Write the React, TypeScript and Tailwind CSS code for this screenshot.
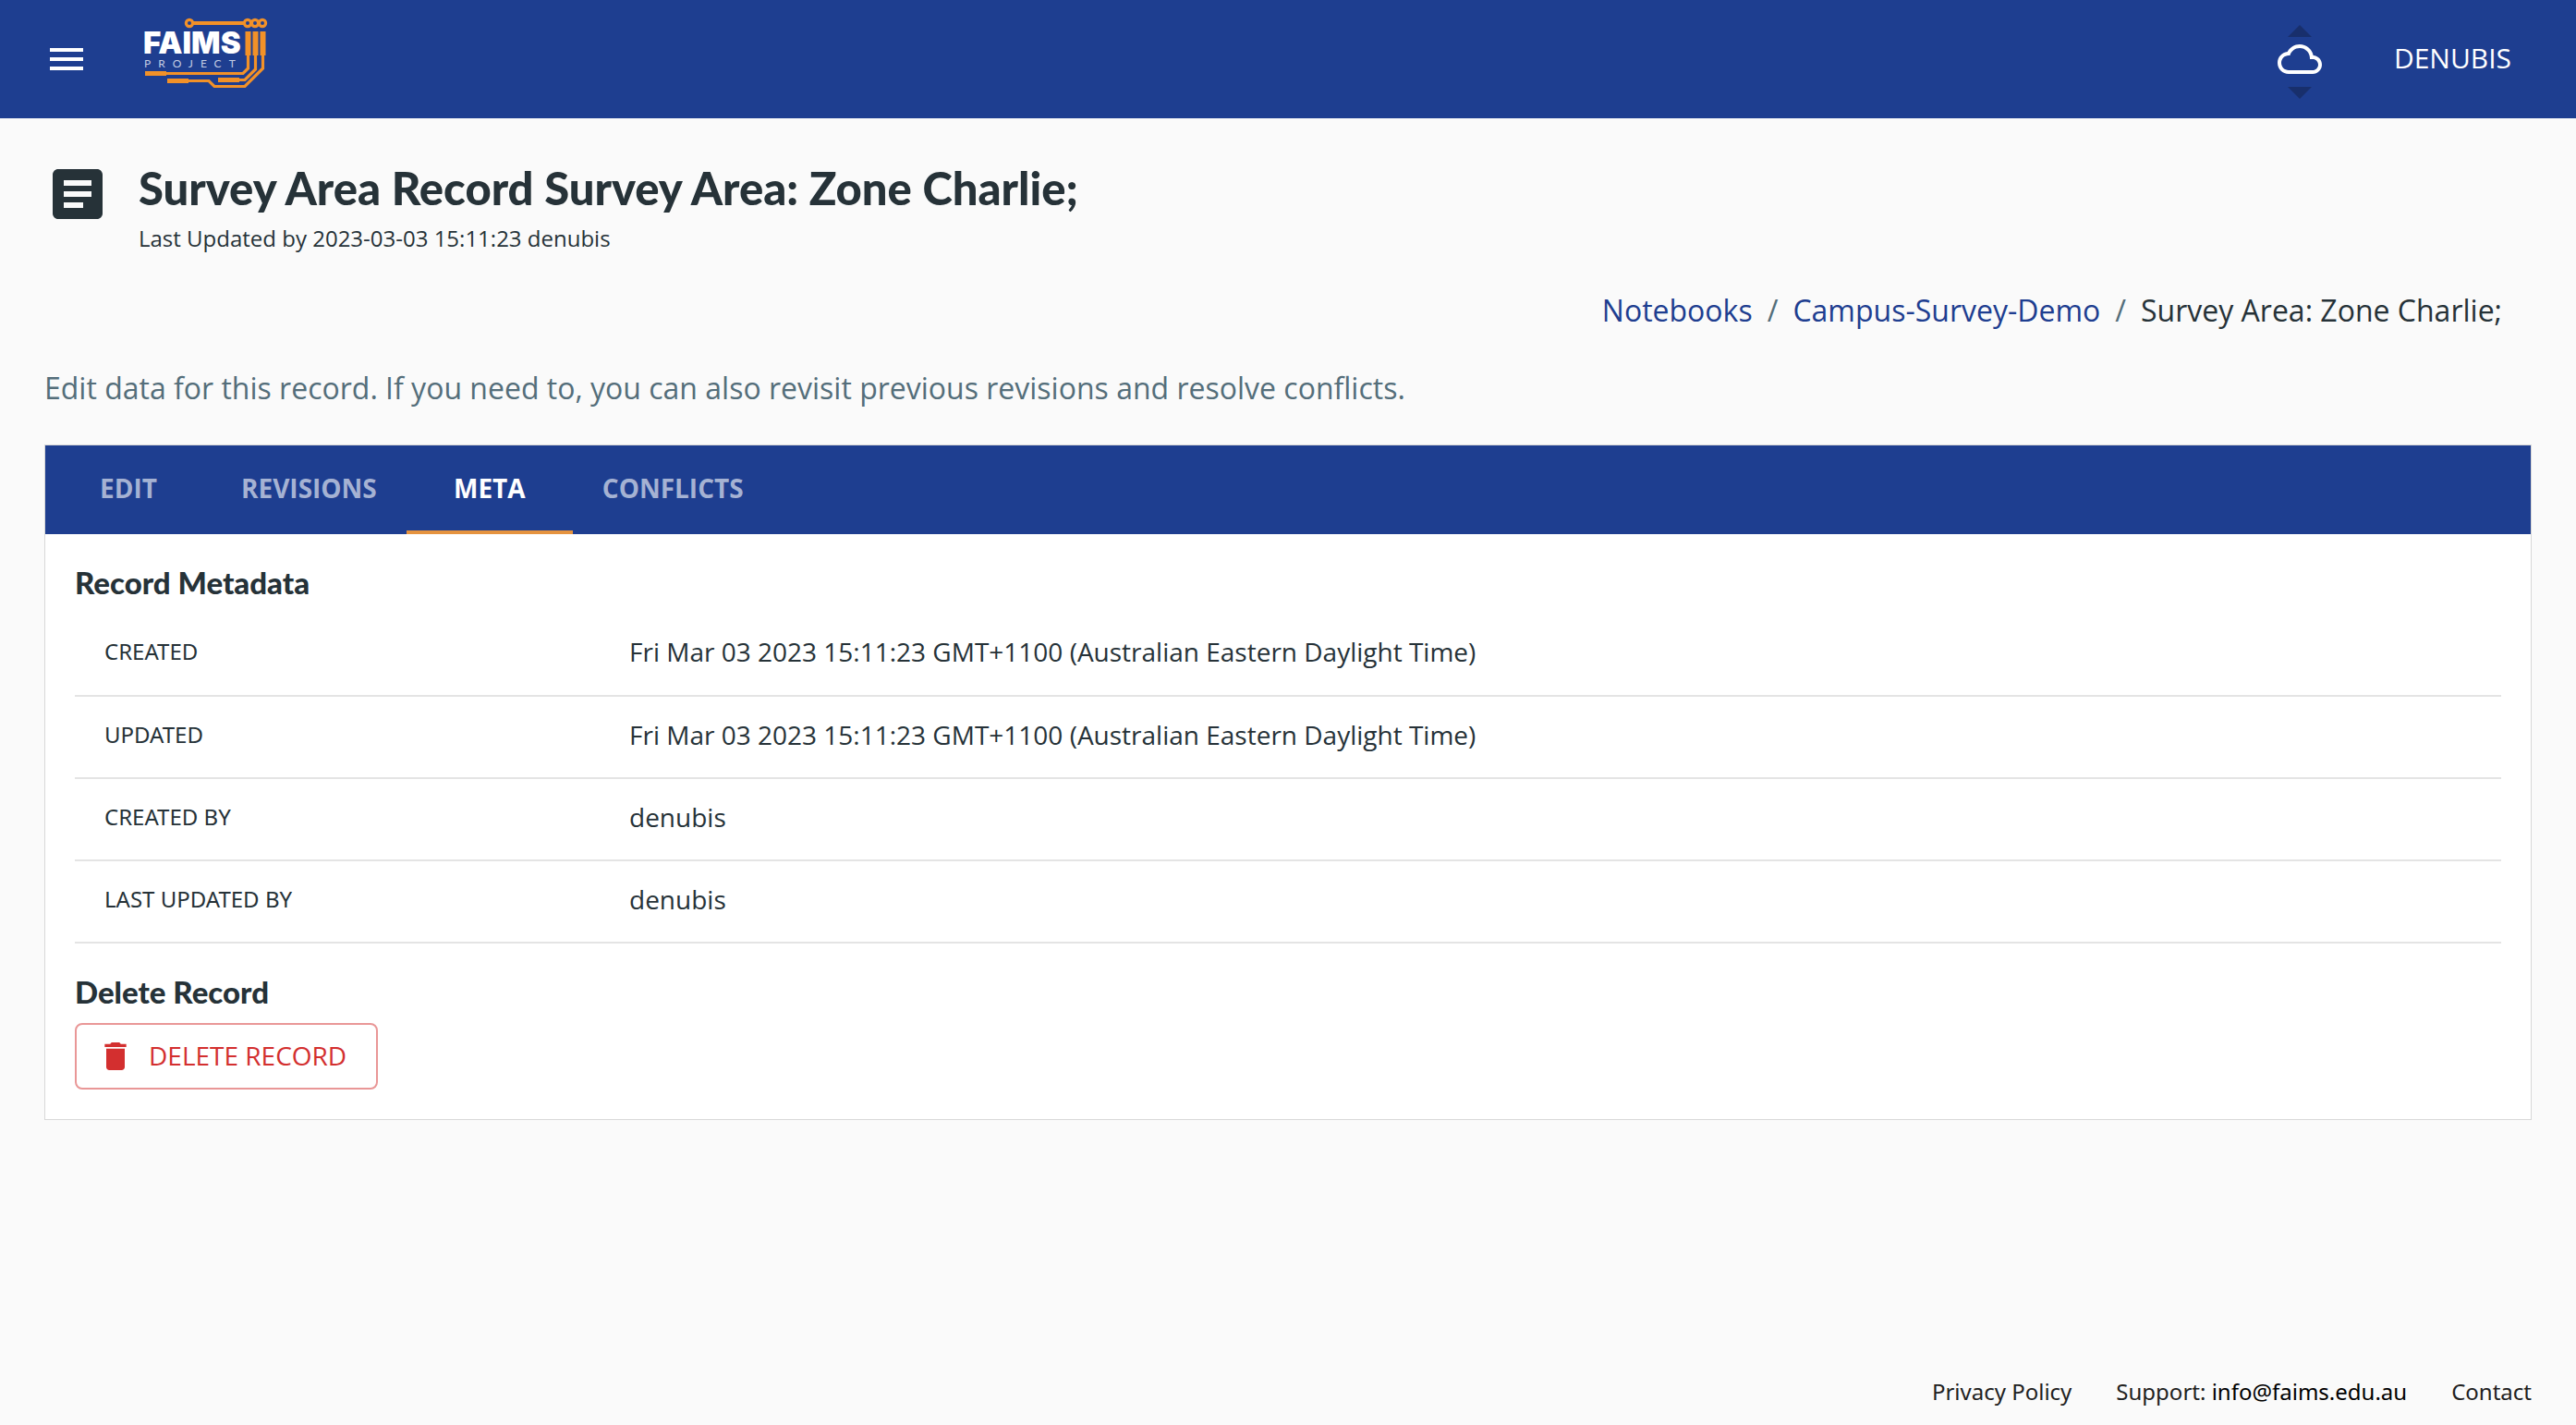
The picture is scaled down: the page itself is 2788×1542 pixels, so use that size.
import React from "react";

function FaimsLogo() {
  return (
    <svg
      viewBox="0 0 136 80"
      className="h-20 w-[136px]"
      fill="none"
      role="img"
      aria-label="FAIMS Project"
    >
      <g stroke="#f29128">
        <g strokeWidth="3.2">
          <circle cx="49" cy="9" r="3.6" />
          <path d="M53 9H108" strokeWidth="4" />
          <circle cx="112" cy="9" r="3.6" />
          <circle cx="120" cy="9" r="3.6" />
          <circle cx="128" cy="9" r="3.6" />
          <path d="M112.500 42V58L107 63.500H22" />
          <path d="M120.500 42V59L109 70.500H100" />
          <path d="M128.500 42V58L109 77.500H76L70 71.500H46" />
        </g>
        <g strokeWidth="6">
          <path d="M112.500 18V44M120.500 18V44M128.500 18V44" />
        </g>
        <g strokeWidth="5">
          <path d="M1 63.500H24M80 70.500H103M25 71.500H48" />
        </g>
      </g>
      <text x="-1" y="42" fill="#fff" className="font-['Inter',sans-serif] text-[33px] font-black">
        FAIMS
      </text>
      <text x="0" y="57" fill="#c3cce3" className="font-['Lato',sans-serif] text-[12px] font-normal tracking-[8px]">
        PROJECT
      </text>
    </svg>
  );
}

function MaterialIcon({ d, className }: { d: string; className: string }) {
  return (
    <svg viewBox="0 0 24 24" fill="currentColor" className={className} aria-hidden="true">
      <path d={d} />
    </svg>
  );
}

const ICONS = {
  menu: "M3 18h18v-2H3v2zm0-5h18v-2H3v2zm0-7v2h18V6H3z",
  cloud:
    "M19.35 10.04C18.67 6.59 15.64 4 12 4 9.11 4 6.6 5.64 5.35 8.04 2.34 8.36 0 10.91 0 14c0 3.31 2.69 6 6 6h13c2.76 0 5-2.24 5-5 0-2.64-2.05-4.78-4.65-4.96zM19 18H6c-2.21 0-4-1.79-4-4s1.79-4 4-4h.71C7.37 7.69 9.48 6 12 6c3.04 0 5.500 2.46 5.500 5.500v.5H19c1.66 0 3 1.34 3 3s-1.34 3-3 3z",
  article:
    "M19 3H5c-1.100 0-2 .9-2 2v14c0 1.100.9 2 2 2h14c1.100 0 2-.9 2-2V5c0-1.100-.9-2-2-2zm-5 14H7v-2h7v2zm3-4H7v-2h10v2zm0-4H7V7h10v2z",
  trash: "M6 19c0 1.100.9 2 2 2h8c1.100 0 2-.9 2-2V7H6v12zM19 4h-3.500l-1-1h-5l-1 1H5v2h14V4z",
};

const TABS = ["EDIT", "REVISIONS", "META", "CONFLICTS"];

const METADATA = [
  ["CREATED", "Fri Mar 03 2023 15:11:23 GMT+1100 (Australian Eastern Daylight Time)"],
  ["UPDATED", "Fri Mar 03 2023 15:11:23 GMT+1100 (Australian Eastern Daylight Time)"],
  ["CREATED BY", "denubis"],
  ["LAST UPDATED BY", "denubis"],
];

function Header() {
  return (
    <header className="flex h-32 items-center bg-[#1e3e90] px-12 text-white">
      <button type="button" aria-label="Open menu" className="mr-[60px]">
        <MaterialIcon d={ICONS.menu} className="size-12" />
      </button>
      <a href="#home" className="-mt-4">
        <FaimsLogo />
      </a>
      <div className="ml-auto flex items-center">
        <button type="button" aria-label="Sync status" className="flex flex-col items-center gap-2 pt-[6px]">
          <svg viewBox="0 0 26 13" className="h-[13px] w-[26px]" fill="#182f6c" aria-hidden="true">
            <path d="M0 13L13 0L26 13Z" />
          </svg>
          <span className="flex h-[38px] items-start">
            <MaterialIcon d={ICONS.cloud} className="-mt-2 size-12" />
          </span>
          <svg viewBox="0 0 26 13" className="h-[13px] w-[26px]" fill="#182f6c" aria-hidden="true">
            <path d="M0 0L13 13L26 0Z" />
          </svg>
        </button>
        <button type="button" className="ml-14 px-[22px] pb-0.5 text-[30px] leading-10 font-medium">
          DENUBIS
        </button>
      </div>
    </header>
  );
}

export default function App() {
  return (
    <div className="flex min-h-screen flex-col bg-[#fafafa] font-['Open_Sans',sans-serif] text-[#263238]">
      <Header />
      <main className="flex-1 px-12 pt-[46px]">
        <div className="flex items-start gap-[30px]">
          <MaterialIcon d={ICONS.article} className="size-[72px]" />
          <div>
            <h1 className="font-['Lato',sans-serif] text-[49px] leading-[58px] font-black">
              Survey Area Record Survey Area: Zone Charlie;
            </h1>
            <p className="mt-1.5 text-[24px] leading-10">Last Updated by 2023-03-03 15:11:23 denubis</p>
          </div>
        </div>
        <nav aria-label="Breadcrumb" className="mt-[34px] flex justify-end gap-4 pr-8 text-[32px] leading-12">
          <a href="#notebooks" className="text-[#1e3e90]">Notebooks</a>
          <span className="text-[#546e7a]">/</span>
          <a href="#survey" className="text-[#1e3e90]">Campus-Survey-Demo</a>
          <span className="text-[#546e7a]">/</span>
          <span>Survey Area: Zone Charlie;</span>
        </nav>
        <p className="mt-9 text-[32px] leading-12 text-[#546e7a]">
          Edit data for this record. If you need to, you can also revisit previous revisions and resolve conflicts.
        </p>

        <section className="mt-[37px] border border-[#d8d8d8] bg-white">
          <div role="tablist" className="flex h-24 bg-[#1e3e90]">
            {TABS.map((tab) => {
              const active = tab === "META";
              return (
                <button
                  key={tab}
                  type="button"
                  role="tab"
                  aria-selected={active}
                  className={
                    active
                      ? "min-w-[180px] border-b-4 border-[#e5933f] px-8 text-[28px] leading-10 font-bold text-white"
                      : "min-w-[180px] border-b-4 border-transparent px-8 text-[28px] leading-10 font-bold text-[#a5b2d3]"
                  }
                >
                  {tab}
                </button>
              );
            })}
          </div>
          <div className="p-8">
            <h2 className="font-['Lato',sans-serif] text-[33px] leading-10 font-black">Record Metadata</h2>
            <table className="mt-[14px] w-full">
              <tbody>
                {METADATA.map(([label, value]) => (
                  <tr key={label} className="h-[89px] border-b-2 border-[#e4e4e4]">
                    <th
                      scope="row"
                      className="w-[568px] px-8 pb-1.5 text-left font-['Noto_Sans',sans-serif] text-[24px] leading-9 font-normal"
                    >
                      {label}
                    </th>
                    <td className="px-8 pb-1.5 text-[28px] leading-10">{value}</td>
                  </tr>
                ))}
              </tbody>
            </table>
            <h2 className="mt-8 font-['Lato',sans-serif] text-[33px] leading-10 font-black">Delete Record</h2>
            <button
              type="button"
              className="mt-[14px] flex h-[72px] items-center gap-4 rounded-lg border-2 border-[#e99797] pr-8 pl-[22px] text-[28px] leading-10 font-medium text-[#d32f2f]"
            >
              <MaterialIcon d={ICONS.trash} className="size-10" />
              <span className="pb-0.5">DELETE RECORD</span>
            </button>
          </div>
        </section>
      </main>
      <footer className="flex justify-end gap-12 px-12 pb-4 font-['Noto_Sans',sans-serif] text-[24px] leading-10 text-[#212121]">
        <a href="#privacy">Privacy Policy</a>
        <span>
          Support: <a href="mailto:info@faims.edu.au" className="text-black">info@faims.edu.au</a>
        </span>
        <a href="#contact">Contact</a>
      </footer>
    </div>
  );
}
